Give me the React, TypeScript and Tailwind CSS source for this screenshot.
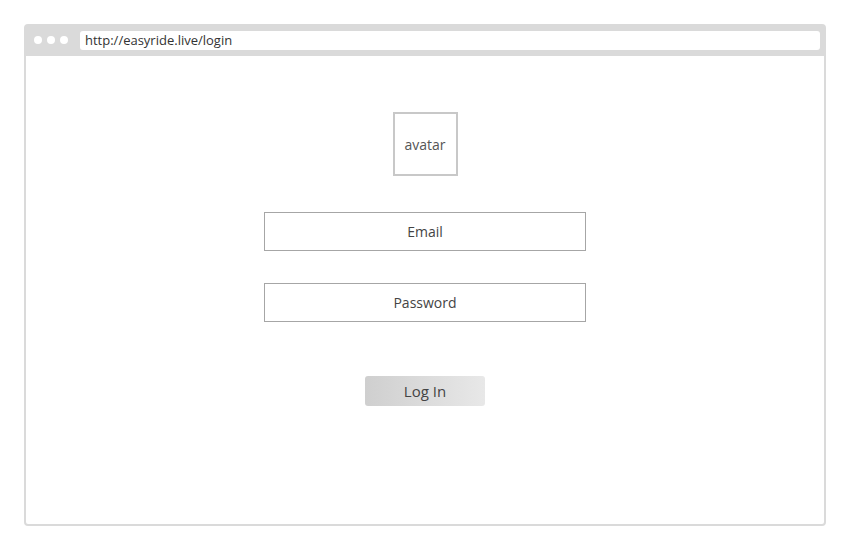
export default function App() {
  return (
    <div className="w-[850px] h-[550px] bg-white pt-6 px-6 font-['Open_Sans','Noto_Sans',sans-serif]">
      <div className="w-[802px] h-[502px] border-2 border-[#dadada] rounded-[4px] flex flex-col">
        <div className="h-[30px] bg-[#dadada] flex items-center pl-[8px] pr-[4px] pb-[2px]">
          <div className="flex gap-[5px] items-center">
            <span className="w-[8px] h-[8px] rounded-full bg-white" />
            <span className="w-[8px] h-[8px] rounded-full bg-white" />
            <span className="w-[8px] h-[8px] rounded-full bg-white" />
          </div>
          <div className="ml-[12px] flex-1 h-[19px] bg-white rounded-[3px] flex items-center pl-[5px] text-[13px] text-[#333] leading-none">
            http://easyride.live/login
          </div>
        </div>
        <div className="flex-1 flex flex-col items-center pt-[56px]">
          <div className="w-[65px] h-[64px] border-2 border-[#c8c8c8] flex items-center justify-center text-[14px] text-[#555]">
            avatar
          </div>
          <div className="mt-[36px] w-[322px] h-[39px] border border-[#a6a6a6] flex items-center justify-center text-[14px] text-[#444]">
            Email
          </div>
          <div className="mt-[32px] w-[322px] h-[39px] border border-[#a6a6a6] flex items-center justify-center text-[14px] text-[#444]">
            Password
          </div>
          <button className="mt-[54px] w-[120px] h-[30px] rounded-[3px] bg-gradient-to-r from-[#cfcfcf] to-[#e8e8e8] text-[15px] text-[#444] flex items-center justify-center">
            Log In
          </button>
        </div>
      </div>
    </div>
  )
}
